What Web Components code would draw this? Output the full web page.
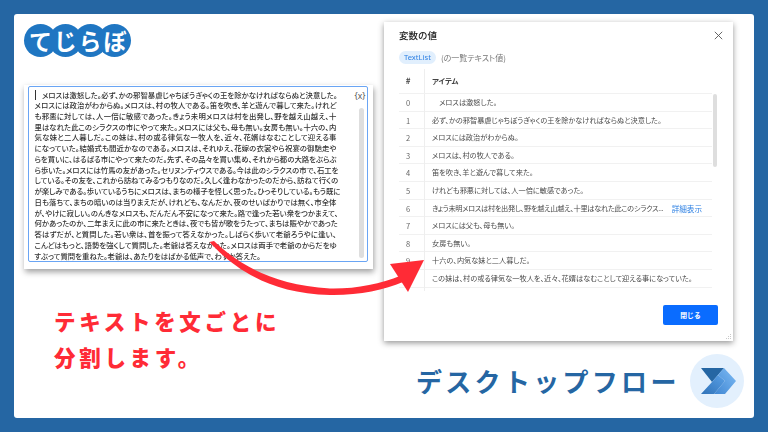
<!DOCTYPE html>
<html lang="ja">
<head>
<meta charset="utf-8">
<title>デスクトップフロー</title>
<style>
  html, body { margin: 0; padding: 0; width: 768px; height: 432px; overflow: hidden; }
  body { font-family: "Noto Sans CJK JP", "Noto Sans", sans-serif; background: #2566a3; }
</style>
</head>
<body>
<slide-frame>
  <div slot="left">
    <brand-logo></brand-logo>
    <editor-panel>
      <div>　メロスは激怒した。必ず、かの邪智暴虐じゃちぼうぎゃくの王を除かなければならぬと決意した。</div>
      <div>メロスには政治がわからぬ。メロスは、村の牧人である。笛を吹き、羊と遊んで暮して来た。けれど</div>
      <div>も邪悪に対しては、人一倍に敏感であった。きょう未明メロスは村を出発し、野を越え山越え、十</div>
      <div>里はなれた此このシラクスの市にやって来た。メロスには父も、母も無い。女房も無い。十六の、内</div>
      <div>気な妹と二人暮しだ。この妹は、村の或る律気な一牧人を、近々、花婿はなむことして迎える事</div>
      <div>になっていた。結婚式も間近かなのである。メロスは、それゆえ、花嫁の衣裳やら祝宴の御馳走や</div>
      <div>らを買いに、はるばる市にやって来たのだ。先ず、その品々を買い集め、それから都の大路をぶらぶ</div>
      <div>ら歩いた。メロスには竹馬の友があった。セリヌンティウスである。今は此のシラクスの市で、石工を</div>
      <div>している。その友を、これから訪ねてみるつもりなのだ。久しく逢わなかったのだから、訪ねて行くの</div>
      <div>が楽しみである。歩いているうちにメロスは、まちの様子を怪しく思った。ひっそりしている。もう既に</div>
      <div>日も落ちて、まちの暗いのは当りまえだが、けれども、なんだか、夜のせいばかりでは無く、市全体</div>
      <div>が、やけに寂しい。のんきなメロスも、だんだん不安になって来た。路で逢った若い衆をつかまえて、</div>
      <div>何かあったのか、二年まえに此の市に来たときは、夜でも皆が歌をうたって、まちは賑やかであった</div>
      <div>答はずだが、と質問した。若い衆は、首を振って答えなかった。しばらく歩いて老爺ろうやに逢い、</div>
      <div>こんどはもっと、語勢を強くして質問した。老爺は答えなかった。メロスは両手で老爺のからだをゆ</div>
      <div>すぶって質問を重ねた。老爺は、あたりをはばかる低声で、わずか答えた。</div>
    </editor-panel>
    <red-caption>
      <div>テキストを文ごとに</div>
      <div>分割します。</div>
    </red-caption>
  </div>
  <div slot="right">
    <value-dialog>
      <value-row index="0">　メロスは激怒した。</value-row>
      <value-row index="1">必ず、かの邪智暴虐じゃちぼうぎゃくの王を除かなければならぬと決意した。</value-row>
      <value-row index="2">メロスには政治がわからぬ。</value-row>
      <value-row index="3">メロスは、村の牧人である。</value-row>
      <value-row index="4">笛を吹き、羊と遊んで暮して来た。</value-row>
      <value-row index="5">けれども邪悪に対しては、人一倍に敏感であった。</value-row>
      <value-row index="6" more>きょう未明メロスは村を出発し、野を越え山越え、十里はなれた此このシラクス...</value-row>
      <value-row index="7">メロスには父も、母も無い。</value-row>
      <value-row index="8">女房も無い。</value-row>
      <value-row index="9">十六の、内気な妹と二人暮しだ。</value-row>
      <value-row index="10">この妹は、村の或る律気な一牧人を、近々、花婿はなむことして迎える事になっていた。</value-row>
      <value-row></value-row>
    </value-dialog>
    <flow-footer>デスクトップフロー</flow-footer>
  </div>
  <curve-arrow></curve-arrow>
</slide-frame>

<script>
  function shadow(el, html) {
    const template = document.createElement("template");
    template.innerHTML = html;
    el.attachShadow({ mode: "open" });
    el.shadowRoot.appendChild(template.content.cloneNode(true));
  }

  class SlideFrame extends HTMLElement {
    constructor() {
      super();
      shadow(this, /* html */ `
        <style>
          :host { display: block; width: 768px; height: 432px; padding: 14px; box-sizing: border-box; background: #2566a3; }
          .card {
            position: relative;
            display: grid;
            grid-template-columns: 370px 370px;
            width: 740px;
            height: 404px;
            background: #fff;
            border-radius: 3px;
          }
          ::slotted([slot="left"]) { padding: 10px 0 0 10px; }
          ::slotted([slot="right"]) { padding: 8px 0 0 0; }
        </style>
        <div class="card">
          <slot name="left"></slot>
          <slot name="right"></slot>
          <slot></slot>
        </div>
      `);
    }
  }

  class BrandLogo extends HTMLElement {
    constructor() {
      super();
      shadow(this, /* html */ `
        <style>
          :host { display: flex; height: 33px; }
          span {
            width: 33px;
            height: 33px;
            margin-right: -8.2px;
            border-radius: 50%;
            background: #1f76c2;
            color: #fff;
            font: 700 23px/32px "Noto Sans CJK JP", sans-serif;
            text-align: center;
          }
        </style>
        <span>て</span><span>じ</span><span>ら</span><span>ぼ</span>
      `);
    }
  }

  class EditorPanel extends HTMLElement {
    constructor() {
      super();
      shadow(this, /* html */ `
        <style>
          :host {
            display: block;
            width: 349px;
            height: 184px;
            margin-top: 28px;
            padding: 1px 5px 7px 4px;
            box-sizing: border-box;
            background: #fff;
            box-shadow: 1px 3px 6px rgba(0, 0, 0, 0.38);
          }
          .field {
            position: relative;
            display: flex;
            height: 100%;
            box-sizing: border-box;
            padding: 2.5px 1px 0 5.5px;
            border: 1px solid #6aa5f4;
            border-radius: 2px;
          }
          .text {
            flex: 1;
            min-width: 0;
            font: 500 7.4px/10.73px "Noto Sans CJK JP", sans-serif;
            font-feature-settings: "palt";
            color: #333;
            white-space: nowrap;
            filter: blur(0.25px);
          }
          /* every wrapped line runs out to the same right edge */
          ::slotted(div) { width: 302px; text-align-last: justify; }
          ::slotted(div:last-child) { text-align-last: left; }
          .caret { position: absolute; left: 6px; top: 3px; width: 1px; height: 10px; background: #333; }
          .side { display: flex; flex-direction: column; align-items: center; width: 10px; flex: none; }
          .vars { font: 400 8.5px/12px "Noto Sans", sans-serif; color: #555; height: 17px; white-space: nowrap; margin-left: -2px; }
          .thumb { width: 5px; flex: 1; margin: 1px 0 3px; border-radius: 3px; background: #dedede; }
        </style>
        <div class="field">
          <i class="caret"></i>
          <div class="text"><slot></slot></div>
          <div class="side">
            <span class="vars">{x}</span>
            <i class="thumb"></i>
          </div>
        </div>
      `);
    }
  }

  class RedCaption extends HTMLElement {
    constructor() {
      super();
      shadow(this, /* html */ `
        <style>
          :host {
            display: block;
            margin: 34px 0 0 30px;
            font: 900 21.5px/36px "Noto Sans CJK JP", sans-serif;
            letter-spacing: 3.7px;
            color: #ff2b36;
            white-space: nowrap;
          }
        </style>
        <slot></slot>
      `);
    }
  }

  class ValueDialog extends HTMLElement {
    constructor() {
      super();
      shadow(this, /* html */ `
        <style>
          :host {
            position: relative;
            display: block;
            width: 349px;
            height: 319px;
            padding: 0 15px;
            box-sizing: border-box;
            background: #fff;
            box-shadow: 0 2px 6px rgba(0, 0, 0, 0.42);
          }
          .head { display: flex; justify-content: space-between; align-items: center; height: 26px; }
          h2 { margin: 0; font: 500 9.5px/26px "Noto Sans CJK JP", sans-serif; color: #222; filter: blur(0.2px); }
          .head svg { margin-right: -5px; }
          .tag-line { display: flex; align-items: center; gap: 5px; height: 13px; margin-top: 3px; filter: blur(0.2px); }
          .tag {
            padding: 0 5px;
            border-radius: 7px;
            background: #e1effd;
            color: #2b7fe3;
            font: 400 7.6px/13px "Noto Sans", sans-serif;
          }
          .note { font: 400 8px/13px "Noto Sans CJK JP", sans-serif; font-feature-settings: "palt"; color: #777; }
          .body { display: flex; margin-top: 5px; height: 222px; }
          .table { flex: 1; overflow: hidden; }
          .cols { display: grid; grid-template-columns: 25px 1fr; height: 25px; border-bottom: 1px solid #f1f1f1; box-sizing: border-box; filter: blur(0.2px); }
          .cols b { font: 700 7.4px/24px "Noto Sans CJK JP", sans-serif; font-feature-settings: "palt"; color: #444; }
          .cols b:first-child { text-align: center; padding-right: 7px; font-size: 8px; }
          .cols b:last-child { padding-left: 7px; border-left: 1px solid #eee; }
          .track { width: 6px; padding-left: 1px; box-sizing: border-box; }
          .track i { display: block; width: 4px; height: 73px; margin-top: 25px; border-radius: 2px; background: #dedede; }
          .foot { display: flex; justify-content: flex-end; margin-top: 14px; }
          button {
            width: 55px;
            height: 20px;
            padding: 0;
            border: 0;
            border-radius: 2px;
            background: #0a6cff;
            color: #fff;
            font: 700 6.8px/20px "Noto Sans CJK JP", sans-serif;
          }
          .grip { position: absolute; right: 1px; bottom: 1px; }
        </style>
        <div class="head">
          <h2>変数の値</h2>
          <svg width="9" height="9" viewBox="0 0 9 9"><path d="M0.8 0.8 8.200 8.200M8.200 0.8 0.8 8.200" stroke="#555" stroke-width="0.9" fill="none"/></svg>
        </div>
        <div class="tag-line"><span class="tag">TextList</span><span class="note">(の一覧テキスト値)</span></div>
        <div class="body">
          <div class="table">
            <div class="cols"><b>#</b><b>アイテム</b></div>
            <slot></slot>
          </div>
          <div class="track"><i></i></div>
        </div>
        <div class="foot"><button>閉じる</button></div>
        <svg class="grip" width="7" height="7" viewBox="0 0 7 7" fill="#c9c9c9">
          <rect x="5" y="1" width="1" height="1"/><rect x="3" y="3" width="1" height="1"/><rect x="5" y="3" width="1" height="1"/>
          <rect x="1" y="5" width="1" height="1"/><rect x="3" y="5" width="1" height="1"/><rect x="5" y="5" width="1" height="1"/>
        </svg>
      `);
    }
  }

  class ValueRow extends HTMLElement {
    constructor() {
      super();
      shadow(this, /* html */ `
        <style>
          :host {
            display: grid;
            grid-template-columns: 25px 1fr;
            height: 17.6px;
            box-sizing: border-box;
            border-bottom: 1px solid #f1f1f1;
            font: 400 7.2px/17.6px "Noto Sans CJK JP", sans-serif;
            font-feature-settings: "palt";
            color: #4a4a4a;
          }
          :host([more]) .txt { letter-spacing: -0.3px; }
          .num { text-align: center; padding-right: 7px; font-size: 7.5px; color: #666; filter: blur(0.2px); }
          .val { display: flex; justify-content: space-between; padding: 0 10px 0 7px; border-left: 1px solid #eee; white-space: nowrap; filter: blur(0.2px); }
          a { color: #2b7fe3; font-size: 7.6px; }
        </style>
        <span class="num"></span>
        <span class="val"><span class="txt"><slot></slot></span></span>
      `);
    }

    connectedCallback() {
      this.shadowRoot.querySelector(".num").textContent = this.getAttribute("index") || "";
      if (this.hasAttribute("more")) {
        const link = document.createElement("a");
        link.textContent = "詳細表示";
        this.shadowRoot.querySelector(".val").appendChild(link);
      }
    }
  }

  class FlowFooter extends HTMLElement {
    constructor() {
      super();
      shadow(this, /* html */ `
        <style>
          :host { display: flex; align-items: center; justify-content: space-between; width: 360px; height: 54px; margin-top: 13px; padding-left: 32px; box-sizing: border-box; }
          span { font: 700 26px/54px "Noto Sans CJK JP", sans-serif; letter-spacing: 3.3px; color: #2566a3; white-space: nowrap; }
          .badge { display: flex; align-items: center; justify-content: center; width: 54px; height: 54px; border-radius: 50%; background: #e3f0fd; }
          svg { margin: 2px 0 0 3px; }
        </style>
        <span><slot></slot></span>
        <div class="badge">
          <svg width="36" height="28" viewBox="0 0 36 28">
            <defs>
              <linearGradient id="mid" x1="0" y1="1" x2="1" y2="0"><stop offset="0" stop-color="#2f72b8"/><stop offset="1" stop-color="#5aa0e6"/></linearGradient>
              <linearGradient id="low" x1="0" y1="1" x2="1" y2="0"><stop offset="0" stop-color="#3f86d2"/><stop offset="1" stop-color="#7fbcf5"/></linearGradient>
            </defs>
            <path d="M0 0H23L11 14Z" fill="#2566a3"/>
            <path d="M23 0 35 13 24 26H13L24 13 17 7Z" fill="url(#low)"/>
            <path d="M11 14 17 7 24 13 13 26H0Z" fill="url(#mid)"/>
          </svg>
        </div>
      `);
    }
  }

  class CurveArrow extends HTMLElement {
    constructor() {
      super();
      // lies over both panels, coordinates are the page's own
      shadow(this, /* html */ `
        <style>
          :host { position: absolute; left: -14px; top: -14px; width: 768px; height: 432px; pointer-events: none; }
        </style>
        <svg width="768" height="432" viewBox="0 0 768 432" fill="#ff2b36">
          <path d="M209.500 242 C226 260 262 294 330 295 C358 295.500 384 290 403 282 L401 275.500 C380 284 356 289 330 288.500 C270 285 236 262 214 241 Z"/>
          <path d="M424 260 L390 264 L408 292 Z"/>
        </svg>
      `);
    }
  }

  customElements.define("slide-frame", SlideFrame);
  customElements.define("brand-logo", BrandLogo);
  customElements.define("editor-panel", EditorPanel);
  customElements.define("red-caption", RedCaption);
  customElements.define("value-dialog", ValueDialog);
  customElements.define("value-row", ValueRow);
  customElements.define("flow-footer", FlowFooter);
  customElements.define("curve-arrow", CurveArrow);
</script>
</body>
</html>
